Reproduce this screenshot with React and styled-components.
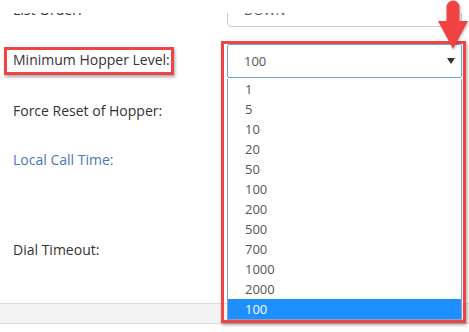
import React from "react";
import styled, { createGlobalStyle } from "styled-components";

const Global = createGlobalStyle`
  html, body {
    margin: 0;
    padding: 0;
    background: #fff;
    overflow: hidden;
  }
  body {
    font-family: "Open Sans", "Liberation Sans", sans-serif;
  }
`;

const Page = styled.div`
  position: relative;
  width: 469px;
  height: 332px;
  overflow: hidden;
`;

const HeaderEdge = styled.div`
  position: absolute;
  top: 0;
  left: 0;
  right: 0;
  height: 13px;
  background: #fff;
  z-index: 1;
`;

const Form = styled.div`
  margin-top: -7px;
  padding-left: 13px;
`;

const Row = styled.div`
  display: grid;
  grid-template-columns: 214px 235px;
  align-items: start;
  height: ${(p) => p.h}px;
`;

const Label = styled.div`
  padding-top: ${(p) => p.top ?? 7}px;
  font-size: 14px;
  line-height: 18px;
  color: ${(p) => (p.link ? "#4a78b8" : "#333")};
`;

const Marked = styled.span`
  position: relative;
  display: inline-block;

  &::after {
    content: "";
    position: absolute;
    inset: -4px -4px -6px -9px;
    border: 3px solid #f24343;
    box-shadow: 1px 2px 3px rgba(0, 0, 0, 0.35);
    pointer-events: none;
  }
`;

const Input = styled.div`
  box-sizing: border-box;
  height: 34px;
  border: 1px solid #ccc;
  border-radius: 4px;
  padding-left: 16px;
  display: flex;
  align-items: center;
  font-size: 13px;
  color: #555;
`;

const SelectWrap = styled.div`
  position: relative;
  height: 34px;
`;

const SelectBox = styled(Input)`
  border-color: #6ea4dc;
  border-radius: 2px;
  justify-content: space-between;
  padding-right: 6px;
`;

const Menu = styled.div`
  position: absolute;
  top: 35px;
  left: 0;
  right: 0;
  background: #fff;
  border: 1px solid #8d9fc0;
  border-top: none;
  z-index: 1;
`;

const Option = styled.div`
  height: 20px;
  line-height: 20px;
  padding-left: 17px;
  font-size: 13px;
  color: ${(p) => (p.active ? "#fff" : "#555")};
  background: ${(p) => (p.active ? "#1e8fff" : "transparent")};
`;

const Callout = styled.div`
  position: absolute;
  top: -3px;
  left: -6px;
  right: -4px;
  height: 282px;
  border: 3px solid #f24343;
  box-sizing: border-box;
  box-shadow: 1px 2px 3px rgba(0, 0, 0, 0.35);
  pointer-events: none;
  z-index: 2;
`;

const Arrow = styled.svg`
  position: absolute;
  left: 211px;
  top: -44px;
  z-index: 3;
  filter: drop-shadow(1px 1px 1px rgba(0, 0, 0, 0.25));
`;

const Footer = styled.div`
  height: 19px;
  background: #f3f3f3;
  border-top: 1px solid #dcdcdc;
  border-bottom: 1px solid #dcdcdc;
`;

const options = ["1", "5", "10", "20", "50", "100", "200", "500", "700", "1000", "2000", "100"];

export default function App() {
  return (
    <Page>
      <Global />
      <HeaderEdge />
      <Form>
        <Row h={51}>
          <Label top={8}>List Order:</Label>
          <Input>DOWN</Input>
        </Row>
        <Row h={51}>
          <Label>
            <Marked>Minimum Hopper Level:</Marked>
          </Label>
          <SelectWrap>
            <SelectBox>
              <span>100</span>
              <svg width="8" height="6" viewBox="0 0 8 6">
                <path d="M0 0 L8 0 L4 6 Z" fill="#333" />
              </svg>
            </SelectBox>
            <Menu>
              {options.map((o, i) => (
                <Option key={i} active={i === options.length - 1}>
                  {o}
                </Option>
              ))}
            </Menu>
            <Callout />
            <Arrow width="30" height="50" viewBox="0 0 30 50">
              <path
                d="M8.5 7 A6.5 6.5 0 0 1 21.5 7 L21.5 21 L30 21 L15 49 L0 21 L8.5 21 Z"
                fill="#f24343"
              />
            </Arrow>
          </SelectWrap>
        </Row>
        <Row h={49}>
          <Label>Force Reset of Hopper:</Label>
        </Row>
        <Row h={90}>
          <Label link>Local Call Time:</Label>
        </Row>
        <Row h={69}>
          <Label>Dial Timeout:</Label>
        </Row>
      </Form>
      <Footer />
    </Page>
  );
}
